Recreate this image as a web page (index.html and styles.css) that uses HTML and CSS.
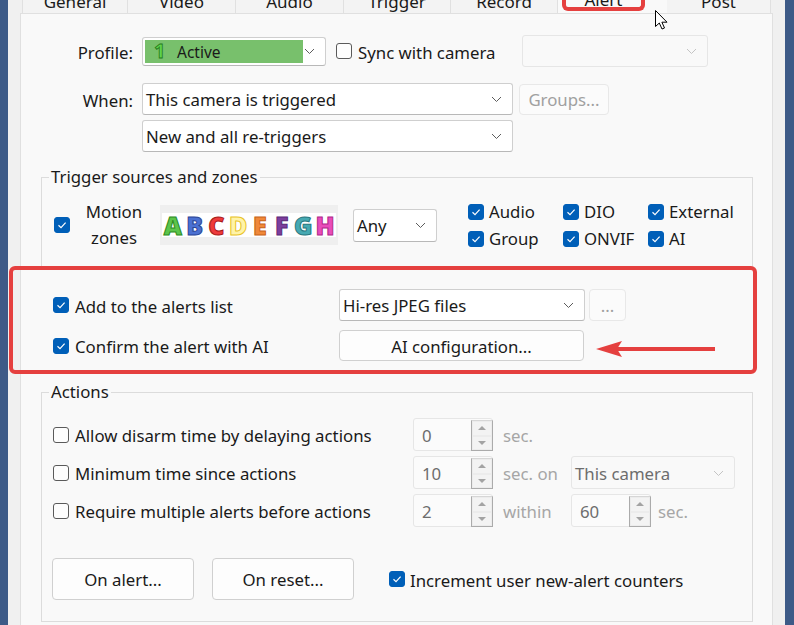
FILE: index.html
```html
<!DOCTYPE html>
<html>
<head>
<meta charset="utf-8">
<link rel="stylesheet" href="styles.css">
</head>
<body>
<div class="window">
  <div class="tabs">
    <div class="tab first t106">General</div>
    <div class="tab t108">Video</div>
    <div class="tab t108">Audio</div>
    <div class="tab t107">Trigger</div>
    <div class="tab t107">Record</div>
    <div class="tab sel t109"><span class="hl">Alert</span></div>
    <div class="tab t104">Post</div>
  </div>
  <div class="panel">
    <div class="row profile-row">
      <div class="lbl">Profile:</div>
      <div class="select profile-select">
        <div class="profile-fill"><span class="num">1</span><span class="act">Active</span></div>
        <svg class="chev" width="11" height="7" viewBox="0 0 11 7"><path d="M1 1 L5.5 5.5 L10 1" fill="none" stroke="#5c5c5c" stroke-width="1"/></svg>
      </div>
      <label class="check sync"><span class="cb"></span><span class="tx">Sync with camera</span></label>
      <div class="select disabled w186">
        <svg class="chev" width="11" height="7" viewBox="0 0 11 7"><path d="M1 1 L5.5 5.5 L10 1" fill="none" stroke="#c4c4c4" stroke-width="1"/></svg>
      </div>
    </div>

    <div class="row when-row">
      <div class="lbl">When:</div>
      <div class="select w371"><span class="stext">This camera is triggered</span>
        <svg class="chev" width="11" height="7" viewBox="0 0 11 7"><path d="M1 1 L5.5 5.5 L10 1" fill="none" stroke="#5c5c5c" stroke-width="1"/></svg>
      </div>
      <div class="btn disabled groups">Groups...</div>
    </div>
    <div class="row when2-row">
      <div class="select w371"><span class="stext">New and all re-triggers</span>
        <svg class="chev" width="11" height="7" viewBox="0 0 11 7"><path d="M1 1 L5.5 5.5 L10 1" fill="none" stroke="#5c5c5c" stroke-width="1"/></svg>
      </div>
    </div>

    <fieldset class="group trig">
      <legend>Trigger sources and zones</legend>
      <div class="trig-row">
        <span class="cb on"><svg width="16" height="16" viewBox="0 0 16 16"><path d="M4.5 8.3 L7 10.6 L11.6 5.6" fill="none" stroke="#fff" stroke-width="1.2"/></svg></span>
        <div class="motion">Motion<br>zones</div>
        <div class="zones">
          <span class="z za">A</span><span class="z zb">B</span><span class="z zc">C</span><span class="z zd">D</span><span class="z ze">E</span><span class="z zf">F</span><span class="z zg">G</span><span class="z zh">H</span>
        </div>
        <div class="select any"><span class="stext">Any</span>
          <svg class="chev" width="11" height="7" viewBox="0 0 11 7"><path d="M1 1 L5.5 5.5 L10 1" fill="none" stroke="#5c5c5c" stroke-width="1"/></svg>
        </div>
        <div class="srcs">
          <label class="check s"><span class="cb on"><svg width="16" height="16" viewBox="0 0 16 16"><path d="M4.5 8.3 L7 10.6 L11.6 5.6" fill="none" stroke="#fff" stroke-width="1.2"/></svg></span>Audio</label>
          <label class="check s"><span class="cb on"><svg width="16" height="16" viewBox="0 0 16 16"><path d="M4.5 8.3 L7 10.6 L11.6 5.6" fill="none" stroke="#fff" stroke-width="1.2"/></svg></span>DIO</label>
          <label class="check s"><span class="cb on"><svg width="16" height="16" viewBox="0 0 16 16"><path d="M4.5 8.3 L7 10.6 L11.6 5.6" fill="none" stroke="#fff" stroke-width="1.2"/></svg></span>External</label>
          <label class="check s"><span class="cb on"><svg width="16" height="16" viewBox="0 0 16 16"><path d="M4.5 8.3 L7 10.6 L11.6 5.6" fill="none" stroke="#fff" stroke-width="1.2"/></svg></span>Group</label>
          <label class="check s"><span class="cb on"><svg width="16" height="16" viewBox="0 0 16 16"><path d="M4.5 8.3 L7 10.6 L11.6 5.6" fill="none" stroke="#fff" stroke-width="1.2"/></svg></span>ONVIF</label>
          <label class="check s"><span class="cb on"><svg width="16" height="16" viewBox="0 0 16 16"><path d="M4.5 8.3 L7 10.6 L11.6 5.6" fill="none" stroke="#fff" stroke-width="1.2"/></svg></span>AI</label>
        </div>
      </div>
    </fieldset>

    <div class="row alert-row1">
      <label class="check acol"><span class="cb on"><svg width="16" height="16" viewBox="0 0 16 16"><path d="M4.5 8.3 L7 10.6 L11.6 5.6" fill="none" stroke="#fff" stroke-width="1.2"/></svg></span><span class="tx">Add to the alerts list</span></label>
      <div class="select w246"><span class="stext">Hi-res JPEG files</span>
        <svg class="chev" width="11" height="7" viewBox="0 0 11 7"><path d="M1 1 L5.5 5.5 L10 1" fill="none" stroke="#5c5c5c" stroke-width="1"/></svg>
      </div>
      <div class="btn disabled dots">...</div>
    </div>
    <div class="row alert-row2">
      <label class="check acol"><span class="cb on"><svg width="16" height="16" viewBox="0 0 16 16"><path d="M4.5 8.3 L7 10.6 L11.6 5.6" fill="none" stroke="#fff" stroke-width="1.2"/></svg></span><span class="tx">Confirm the alert with AI</span></label>
      <div class="btn aiconf">AI configuration...</div>
    </div>

    <fieldset class="group actions">
      <legend>Actions</legend>
      <div class="act-grid">
        <label class="check"><span class="cb"></span><span class="tx">Allow disarm time by delaying actions</span></label>
        <div class="spin"><span class="val">0</span><span class="btns"><span class="up"></span><span class="dn"></span></span></div>
        <div class="unit">sec.</div>
        <div></div>

        <label class="check"><span class="cb"></span><span class="tx">Minimum time since actions</span></label>
        <div class="spin"><span class="val">10</span><span class="btns"><span class="up"></span><span class="dn"></span></span></div>
        <div class="unit">sec. on</div>
        <div class="select disabled w164"><span class="stext dim">This camera</span>
          <svg class="chev" width="11" height="7" viewBox="0 0 11 7"><path d="M1 1 L5.5 5.5 L10 1" fill="none" stroke="#c4c4c4" stroke-width="1"/></svg>
        </div>

        <label class="check"><span class="cb"></span><span class="tx">Require multiple alerts before actions</span></label>
        <div class="spin"><span class="val">2</span><span class="btns"><span class="up"></span><span class="dn"></span></span></div>
        <div class="unit">within</div>
        <div class="pair">
          <div class="spin"><span class="val">60</span><span class="btns"><span class="up"></span><span class="dn"></span></span></div>
          <span class="unit2">sec.</span>
        </div>
      </div>
      <div class="btn-row">
        <div class="btn big">On alert...</div>
        <div class="btn big">On reset...</div>
        <label class="check inc"><span class="cb on"><svg width="16" height="16" viewBox="0 0 16 16"><path d="M4.5 8.3 L7 10.6 L11.6 5.6" fill="none" stroke="#fff" stroke-width="1.2"/></svg></span><span class="tx">Increment user new-alert counters</span></label>
      </div>
    </fieldset>
  </div>
</div>

<div class="anno-box"></div>
<svg class="anno-arrow" width="124" height="20" viewBox="594 339 124 20">
  <path d="M596 349 L622 341 L617 349 L622 357 Z" fill="#e5403f"/>
  <rect x="616" y="347" width="99" height="4" fill="#e5403f"/>
</svg>
<svg class="cursor" width="14" height="21" viewBox="0 0 14 21">
  <path d="M0.5 0.5 L0.5 16.5 L4.3 13 L7 19 L9.5 18 L6.9 12.2 L12 12.2 Z" fill="#fff" stroke="#000" stroke-width="1" stroke-linejoin="round"/>
</svg>
</body>
</html>
```
FILE: styles.css
```css
* { box-sizing: border-box; }
html, body { margin: 0; height: 625px; overflow: hidden; }
body {
  position: relative;
  background: #3d5a87;
  font-family: "Noto Sans", "Open Sans", sans-serif;
  font-size: 16.8px;
  color: #1a1a1a;
}
.window {
  display: flow-root;
  margin: 0 9px 0 8px;
  height: 625px;
  background: #f0f0f0;
  padding: 0 12px;
}
.tabs {
  display: flex;
  height: 34px;
  margin-top: -21px;
  margin-left: 2px;
}
.tab {
  height: 34px;
  border: 1px solid #e0e0e0;
  border-left: none;
  border-bottom: none;
  background: #f3f3f3;
  text-align: center;
  padding-top: 12px;
  line-height: 20px;
  font-size: 17px;
}
.tab.first { border-left: 1px solid #e0e0e0; }
.t104 { width: 104px; } .t106 { width: 106px; } .t107 { width: 107px; }
.t108 { width: 108px; } .t109 { width: 109px; }
.tab.sel { background: #f9f9f9; padding-top: 0; border: none; }
.hl {
  display: block;
  width: 83px;
  height: 32px;
  margin-left: 4px;
  border: 4px solid #e5403f;
  border-top: none;
  border-radius: 0 0 6px 6px;
  padding-top: 11px;
  line-height: 20px;
}
.panel {
  background: #f9f9f9;
  border: 1px solid #e0e0e0;
  height: 640px;
}
.row { display: flex; align-items: center; }
.lbl { width: 112px; text-align: right; margin-right: 9px; padding-top: 3px; }
.tx { padding-top: 2px; }
.select {
  position: relative;
  display: flex;
  align-items: center;
  height: 32px;
  background: #fff;
  border: 1px solid #cfcfcf;
  border-bottom-color: #b8b8b8;
  border-radius: 3px;
}
.select .chev { position: absolute; right: 10px; top: 50%; margin-top: -3px; }
.select.disabled { background: #f9f9f9; border-color: #e6e6e6; }
.stext { padding-left: 3px; padding-top: 1px; white-space: nowrap; }
.stext.dim { color: #6d6d6d; }
.profile-row { margin-top: 21px; height: 32px; }
.profile-select { width: 184px; height: 29px; padding: 2px; }
.profile-fill {
  width: 158px; height: 23px; background: #78c06c;
  display: flex; align-items: center; padding-left: 9px;
}
.num {
  font-weight: 700; font-size: 20px; color: #5fd44c;
  -webkit-text-stroke: 0.8px #237a1a; width: 23px; line-height: 20px;
}
.act { font-size: 15.5px; color: #1a1a1a; padding-top: 1px; }
.check { display: flex; align-items: center; white-space: nowrap; }
.cb {
  display: inline-block; width: 16px; height: 16px; flex: none;
  border: 1px solid #5a5a5a; border-radius: 3px; background: #fdfdfd;
  margin-right: 6px;
}
.cb.on { background: #005fb8; border-color: #005fb8; position: relative; }
.cb.on svg { position: absolute; left: -1px; top: -1px; }
.sync { width: 186px; margin-left: 10px; }
.w186 { width: 186px; }
.w371 { width: 371px; }
.w246 { width: 246px; }
.w164 { width: 164px; height: 33px; }
.btn {
  display: flex; align-items: center; justify-content: center;
  background: #fdfdfd; border: 1px solid #d0d0d0; border-radius: 4px;
  white-space: nowrap; padding-top: 1px;
}
.btn.disabled { background: #fbfbfb; border-color: #e8e8e8; color: #a0a0a0; }
.when-row { margin-top: 16px; height: 32px; }
.groups { width: 90px; height: 31px; margin-left: 6px; }
.when2-row { margin-top: 5px; height: 32px; padding-left: 121px; }

fieldset.group {
  margin: 0 19px 0 20px;
  padding: 0;
  border: 1px solid #dcdcdc;
  min-width: 0;
}
fieldset.group legend {
  margin-left: 7px;
  padding: 0 2px;
  line-height: 20px;
}
.trig { margin-top: 15px !important; padding-bottom: 15px !important; }
.trig-row {
  display: flex; align-items: center; height: 54px;
  margin-top: 11px; padding-left: 12px;
}
.trig-row > .cb { margin-right: 0; }
.motion { width: 58px; margin-left: 15px; text-align: center; line-height: 26px; }
.zones {
  margin-left: 17px; width: 178px; height: 40px; background: #efefef;
  display: flex; align-items: center; padding: 0 2px;
}
.z {
  flex: 1; text-align: center; background: #fff; height: 24px;
  font-family: "Open Sans", "Noto Sans", sans-serif;
  font-weight: 800; font-size: 25px; line-height: 24px;
  -webkit-text-stroke: 1px;
}
.za { color: #5cc44a; -webkit-text-stroke-color: #2c8a22; }
.zb { color: #4a70d2; -webkit-text-stroke-color: #2a4394; }
.zc { color: #ee3b3b; -webkit-text-stroke-color: #a81a1a; }
.zd { color: #fff3a8; -webkit-text-stroke-color: #e8c428; }
.ze { color: #f0883a; -webkit-text-stroke-color: #c86418; }
.zf { color: #7c3e9e; -webkit-text-stroke-color: #5a2a78; }
.zg { color: #46a9b2; -webkit-text-stroke-color: #2a7880; }
.zh { color: #e94cbb; -webkit-text-stroke-color: #b02a8a; }
.any { width: 84px; height: 33px; margin-left: 15px; }
.srcs {
  margin-left: 31px;
  display: grid;
  grid-template-columns: 95px 85px auto;
  grid-template-rows: 27px 27px;
  align-items: center;
}
.check.s .cb { margin-right: 5px; }

.alert-row1 { margin-top: 21px; height: 32px; padding-left: 32px; }
.acol { width: 286px; }
.dots { width: 37px; height: 32px; margin-left: 4px; }
.alert-row2 { margin-top: 9px; height: 31px; padding-left: 32px; }
.aiconf { width: 245px; height: 31px; }

.actions { margin-top: 21px !important; padding-bottom: 21px !important; }
.act-grid {
  display: grid;
  grid-template-columns: 360px 80px 78px auto;
  grid-auto-rows: 33px;
  row-gap: 5px;
  align-items: center;
  margin-top: 16px;
  padding-left: 11px;
}
.spin {
  display: flex; width: 80px; height: 33px;
  background: #fbfbfb; border: 1px solid #e6e6e6; border-radius: 3px;
}
.val { flex: 1; padding-left: 8px; color: #6d6d6d; line-height: 31px; padding-top: 1px; }
.btns {
  width: 22px; display: flex; flex-direction: column;
  border: 1px solid #ababab; border-top-color: #d6d6d6;
  margin: 1px -1px -1px 0; background: #fafafa;
}
.btns span { flex: 1; position: relative; border: 1px solid #ececec; background: #f3f3f3; }
.btns .up::after, .btns .dn::after {
  content: ""; position: absolute; left: 50%; top: 50%; margin-left: -4px;
  border-left: 4px solid transparent; border-right: 4px solid transparent;
}
.btns .up::after { border-bottom: 4px solid #a3a3a3; margin-top: -2px; }
.btns .dn::after { border-top: 4px solid #a3a3a3; margin-top: -2px; }
.unit { padding-left: 10px; color: #a6a6a6; padding-top: 2px; }
.pair { display: flex; align-items: center; }
.unit2 { margin-left: 7px; color: #a6a6a6; padding-top: 2px; }
.btn-row {
  display: flex; align-items: center; margin-top: 31px; padding-left: 10px;
}
.big { width: 142px; height: 42px; margin-right: 18px; }
.inc { margin-left: 17px; }
.inc .cb { margin-right: 5px; }

.anno-box {
  position: absolute; left: 9px; top: 266px; width: 748px; height: 108px;
  border: 4px solid #e5403f; border-radius: 6px;
}
.anno-arrow { position: absolute; left: 594px; top: 339px; }
.cursor { position: absolute; left: 655px; top: 10px; }
```
